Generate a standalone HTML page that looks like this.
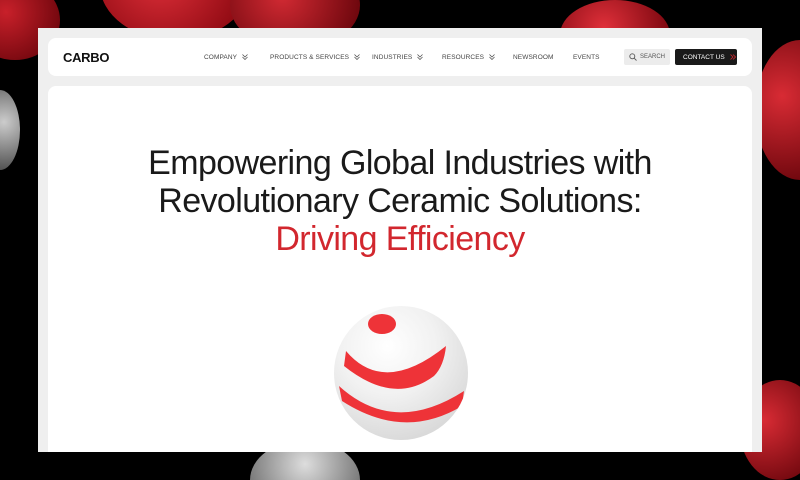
<!DOCTYPE html>
<html><head><style>
*{margin:0;padding:0;box-sizing:border-box}
html,body{width:800px;height:480px;overflow:hidden}
body{background:#000;position:relative;font-family:"Liberation Sans",sans-serif}
.bg{position:absolute;left:0;top:0;width:800px;height:480px;overflow:hidden}
.b{position:absolute;border-radius:50%}
.frame{position:absolute;left:38px;top:28px;width:724px;height:424px;background:#efefef;overflow:hidden}
.nav{position:absolute;left:10px;top:10px;width:704px;height:38px;background:#fff;border-radius:8px}
.logo{position:absolute;left:15px;top:12px;font-weight:bold;font-size:13px;letter-spacing:-0.3px;color:#111}
.it{position:absolute;top:16px;font-size:6.5px;color:#444;letter-spacing:0.1px;white-space:nowrap}
.it svg{vertical-align:-1px;margin-left:5px}
.srch{position:absolute;left:576px;top:11px;width:46px;height:16px;background:#ececec;border-radius:2px;font-size:6px;color:#555;padding:5px 0 0 16px}
.cta{position:absolute;left:627px;top:11px;width:62px;height:16px;background:#1a1a1a;border-radius:2px;font-size:6.5px;color:#fff;padding:4.5px 0 0 8px;white-space:nowrap}
.main{position:absolute;left:10px;top:58px;width:704px;height:366px;background:#fff;border-radius:8px 8px 0 0}
h1{position:absolute;left:0;width:704px;top:58px;text-align:center;font-weight:normal;font-size:34px;line-height:38px;color:#1a1a1a;letter-spacing:-0.6px}
h1 em{font-style:normal;color:#d2272e}
.sph{position:absolute;left:286px;top:220px;width:134px;height:134px;border-radius:50%;background:radial-gradient(circle at 40% 30%,#fff 0,#f1f1f1 40%,#d8d8d8 80%,#bbb 100%);overflow:hidden}
</style></head><body>
<div class="bg">
<div class="b" style="left:100px;top:-70px;width:150px;height:110px;background:radial-gradient(circle at 40% 40%,#e0303a,#7a0008)"></div>
<div class="b" style="left:230px;top:-40px;width:130px;height:90px;background:radial-gradient(circle at 40% 40%,#d22a33,#5a0006)"></div>
<div class="b" style="left:-30px;top:-20px;width:90px;height:80px;background:radial-gradient(circle at 40% 40%,#c8202a,#5a0006)"></div>
<div class="b" style="left:560px;top:0px;width:110px;height:70px;background:radial-gradient(circle at 40% 40%,#e0303a,#6a0008)"></div>
<div class="b" style="left:755px;top:40px;width:90px;height:140px;background:radial-gradient(circle at 30% 40%,#d82b34,#5a0006)"></div>
<div class="b" style="left:740px;top:380px;width:80px;height:100px;background:radial-gradient(circle at 30% 40%,#d82b34,#5a0006)"></div>
<div class="b" style="left:-20px;top:90px;width:40px;height:80px;background:radial-gradient(circle at 60% 40%,#ccc,#444)"></div>
<div class="b" style="left:250px;top:440px;width:110px;height:80px;background:radial-gradient(circle at 50% 30%,#ddd,#555)"></div>
</div>
<div class="frame">
<div class="nav"><div class="logo">CARBO</div>
<div class="it" style="left:156px">COMPANY<svg width="6" height="6" viewBox="0 0 6 6"><path d="M0.5 0.5L3 3L5.5 0.5M0.5 3L3 5.5L5.5 3" fill="none" stroke="#444" stroke-width="0.7"/></svg></div>
<div class="it" style="left:222px">PRODUCTS &amp; SERVICES<svg width="6" height="6" viewBox="0 0 6 6"><path d="M0.5 0.5L3 3L5.5 0.5M0.5 3L3 5.5L5.5 3" fill="none" stroke="#444" stroke-width="0.7"/></svg></div>
<div class="it" style="left:324px">INDUSTRIES<svg width="6" height="6" viewBox="0 0 6 6"><path d="M0.5 0.5L3 3L5.5 0.5M0.5 3L3 5.5L5.5 3" fill="none" stroke="#444" stroke-width="0.7"/></svg></div>
<div class="it" style="left:394px">RESOURCES<svg width="6" height="6" viewBox="0 0 6 6"><path d="M0.5 0.5L3 3L5.5 0.5M0.5 3L3 5.5L5.5 3" fill="none" stroke="#444" stroke-width="0.7"/></svg></div>
<div class="it" style="left:465px">NEWSROOM</div>
<div class="it" style="left:525px">EVENTS</div>
<div class="srch"><svg style="position:absolute;left:5px;top:4px" width="8" height="8" viewBox="0 0 8 8"><circle cx="3.3" cy="3.3" r="2.5" fill="none" stroke="#555" stroke-width="0.9"/><path d="M5.2 5.2L7.5 7.5" stroke="#555" stroke-width="0.9"/></svg>SEARCH</div>
<div class="cta">CONTACT US<svg style="margin-left:5px;vertical-align:-1px" width="6" height="6" viewBox="0 0 6 6"><path d="M0.5 0.5L3 3L0.5 5.5M3 0.5L5.5 3L3 5.5" fill="none" stroke="#d2272e" stroke-width="0.8"/></svg></div>
</div>
<div class="main">
<h1>Empowering Global Industries with<br>Revolutionary Ceramic Solutions:<br><em>Driving Efficiency</em></h1>
<div class="sph"><svg width="134" height="134" viewBox="0 0 134 134">
<ellipse cx="48" cy="18" rx="14" ry="10" fill="#ee3338"/>
<path d="M12 45 Q50 90 112 40 Q110 60 100 70 Q60 100 10 60 Z" fill="#ee3338"/>
<path d="M5 80 Q60 130 130 85 L128 100 Q70 135 8 95 Z" fill="#ee3338"/>
</svg></div>
</div>
</div>
</body></html>
